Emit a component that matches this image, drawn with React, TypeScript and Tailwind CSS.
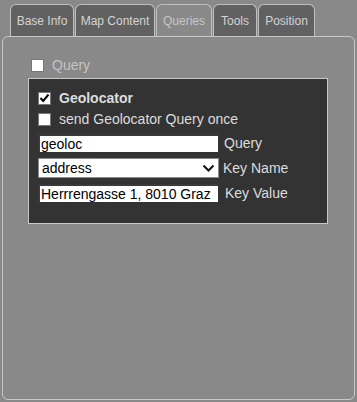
import React from 'react';

const tabs = [
  { label: 'Base Info', w: 'w-[64px]' },
  { label: 'Map Content', w: 'w-[80px]' },
  { label: 'Queries', w: 'w-[56px]' },
  { label: 'Tools', w: 'w-[44px]' },
  { label: 'Position', w: 'w-[57px]' },
];

export default function App() {
  return (
    <div className="w-[357px] h-[402px] bg-[#898989] flex flex-col pt-[4px] px-[2px] pb-[2px] font-['Liberation_Sans',Arial,sans-serif]">
      <div className="flex pl-[8px] gap-[1px] h-[32px] shrink-0">
        {tabs.map(t => (
          <Tab key={t.label} label={t.label} width={t.w} active={t.label === 'Queries'} />
        ))}
      </div>
      <div className="flex-1 border border-[#c8c8c8] rounded-[6px] pt-[20px] pl-[25px] pr-[26px]">
        <label className="flex items-center gap-[8px] h-[16px] ml-[3px] text-[14px] leading-none text-[#c4c4c4]">
          <Box />
          Query
        </label>
        <div className="mt-[5px] bg-[#333333] border border-[#c8c8c8] h-[146px] pt-[12px] pl-[9px] leading-none">
          <label className="flex items-center gap-[8px] h-[14px] text-[14px] font-bold text-[#dddddd]">
            <Box checked />
            Geolocator
          </label>
          <label className="flex items-center gap-[8px] h-[14px] mt-[7px] text-[14px] text-[#dddddd]">
            <Box />
            send Geolocator Query once
          </label>
          <div className="flex items-center h-[18px] mt-[8px] gap-[6px]">
            <Field value="geoloc" />
            <span className="text-[14px] text-[#dddddd]">Query</span>
          </div>
          <div className="flex items-center h-[20px] mt-[6px] gap-[4px]">
            <div className="w-[181px] h-[20px] bg-white border border-[#8a8a8a] flex items-center justify-between pl-[3px] pr-[3px] text-[14px] text-black">
              <span>address</span>
              <svg width="13" height="9" viewBox="0 0 13 9" fill="none">
                <path d="M1.5 1.5 L6.5 6.5 L11.5 1.5" stroke="#111" strokeWidth="2" />
              </svg>
            </div>
            <span className="text-[14px] text-[#dddddd]">Key Name</span>
          </div>
          <div className="flex items-center h-[18px] mt-[6px] gap-[7px]">
            <Field value="Herrrengasse 1, 8010 Graz" />
            <span className="text-[14px] text-[#dddddd]">Key Value</span>
          </div>
        </div>
      </div>
    </div>
  );
}

function Tab({ label, width, active }: { label: string; width: string; active: boolean }) {
  return (
    <div
      className={`${width} h-full flex items-center justify-center border border-b-0 border-[#c0c0c0] rounded-t-[6px] text-[12px] whitespace-nowrap ${
        active ? 'bg-[#898989] text-[#c6c6c6]' : 'bg-[#616161] text-[#d4d4d4]'
      }`}
    >
      {label}
    </div>
  );
}

function Box({ checked }: { checked?: boolean }) {
  return (
    <span className="w-[13px] h-[13px] bg-white border border-[#777] flex items-center justify-center shrink-0">
      {checked && (
        <svg width="11" height="10" viewBox="0 0 11 10" fill="none">
          <path d="M1.5 5 L4.2 8 L9.5 1.5" stroke="#000" strokeWidth="2" />
        </svg>
      )}
    </span>
  );
}

function Field({ value }: { value: string }) {
  return (
    <div className="w-[180px] h-[18px] bg-white border-t-2 border-l-2 border-[#3a3a3a] flex items-center pl-[1px] text-[14px] text-black">
      {value}
    </div>
  );
}
